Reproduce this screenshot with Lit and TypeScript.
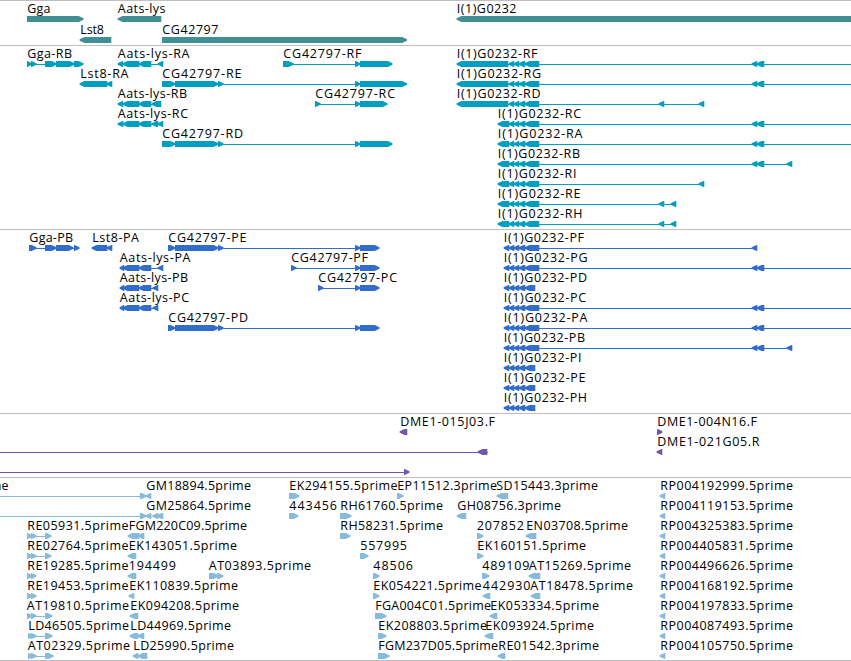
import { LitElement, css, html, nothing, svg } from 'lit'
import { customElement, property } from 'lit/decorators.js'

type Span = [number, number]

interface Feature {
  row: number
  // label text with the first and last x it covers
  label?: [string, number, number]
  strand?: string
  spans: Span[]
  line?: Span
}

interface Track {
  name: string
  height: number
  pitch: number
  features: Feature[]
}

const EDGE = 860

const f = (row: number, text: string, x: number, end: number, strand: string, spans: Span[], line?: Span): Feature => (
  { row, label: [text, x, end], strand, spans, line }
)

const reverseTail: Span[] = [[509, 514], [514, 519], [519, 525]]
const geneTail: Span[] = [...reverseTail, [525, 539]]
const longTranscript: Span[] = [[457, 508], ...geneTail]
const shortTranscript: Span[] = [[498, 509], ...geneTail]
const protein: Span[] = [[504, 509], ...geneTail]
const shortProtein: Span[] = [[504, 509], ...reverseTail, [525, 535]]
const far: Span[] = [[752, 757], [757, 764]]

const genes: Feature[] = [
  f(0, 'Gga', 28, 50, '>', [[27, 83]]),
  f(0, 'Aats-lys', 118.5, 165, '<', [[118, 161]]),
  f(0, 'I(1)G0232', 457.5, 516, '<', [[457, EDGE]]),
  f(1, 'Lst8', 81, 103.5, '<', [[80, 111]]),
  f(1, 'CG42797', 163, 218, '>', [[162, 406.5]]),
]

const transcripts: Feature[] = [
  f(0, 'Gga-RB', 28, 71.5, '>', [[27, 31], [31, 36], [45, 56], [56, 74], [74, 83]]),
  f(0, 'Aats-lys-RA', 118.5, 189, '<', [[118, 123], [123, 139], [139, 151], [158, 163]]),
  f(0, 'CG42797-RF', 284, 361, '>', [[283, 293], [355, 360], [360, 392]]),
  f(0, 'I(1)G0232-RF', 457.5, 537, '<', [...longTranscript, ...far], [457, EDGE]),
  f(1, 'Lst8-RA', 81, 128, '<', [[80, 107], [107, 112]]),
  f(1, 'CG42797-RE', 163, 241, '>', [[162, 175], [175, 218], [218, 223], [355, 360], [360, 406.5]]),
  f(1, 'I(1)G0232-RG', 457.5, 540.5, '<', [...longTranscript, ...far], [457, EDGE]),
  f(2, 'Aats-lys-RB', 118.5, 186.5, '<', [[118, 123], [123, 139], [139, 151], [152, 161]]),
  f(2, 'CG42797-RC', 316, 394.5, '>', [[315, 320], [355, 360], [360, 387]]),
  f(2, 'I(1)G0232-RD', 457.5, 540, '<', [...longTranscript, [659, 664], [699, 704]]),
  f(3, 'Aats-lys-RC', 118.5, 187.5, '<', [[118, 123], [123, 139], [139, 151], [152, 158], [158, 163]]),
  f(3, 'I(1)G0232-RC', 498.5, 580.5, '<', [...shortTranscript, ...far], [498, EDGE]),
  f(4, 'CG42797-RD', 163, 242.5, '>', [[162, 175], [175, 218], [218, 223], [355, 360], [360, 392]]),
  f(4, 'I(1)G0232-RA', 498.5, 582, '<', [...shortTranscript, ...far], [498, EDGE]),
  f(5, 'I(1)G0232-RB', 498.5, 579.5, '<', [...shortTranscript, ...far, [787, 792]]),
  f(6, 'I(1)G0232-RI', 498.5, 576, '<', [...shortTranscript, [699, 704]]),
  f(7, 'I(1)G0232-RE', 498.5, 580, '<', [...shortTranscript, [659, 664], [671, 676]]),
  f(8, 'I(1)G0232-RH', 498.5, 582, '<', [...shortTranscript, [659, 664], [671, 676]]),
]

const proteins: Feature[] = [
  f(0, 'Gga-PB', 30, 72.5, '>', [[29, 36], [45, 56], [56, 73], [74, 79]]),
  f(0, 'Lst8-PA', 93, 138.5, '<', [[92, 107], [107, 112]]),
  f(0, 'CG42797-PE', 169, 246, '>', [[168, 175], [175, 218], [218, 223], [355, 360], [360, 379]]),
  f(0, 'I(1)G0232-PF', 504.5, 583.5, '<', [...protein, [752, 757]]),
  f(1, 'Aats-lys-PA', 120.5, 190, '<', [[120, 124], [123, 139], [139, 151], [158, 163]]),
  f(1, 'CG42797-PF', 292, 367.5, '>', [[291, 296], [355, 360], [360, 379]]),
  f(1, 'I(1)G0232-PG', 504.5, 587, '<', [...protein, ...far], [504, EDGE]),
  f(2, 'Aats-lys-PB', 120.5, 187.5, '<', [[120, 124], [123, 139], [139, 151], [153, 158]]),
  f(2, 'CG42797-PC', 319, 396.5, '>', [[318, 323], [355, 360], [360, 379]]),
  f(2, 'I(1)G0232-PD', 504.5, 586.5, '<', shortProtein),
  f(3, 'Aats-lys-PC', 120.5, 188.5, '<', [[120, 124], [123, 139], [139, 151], [153, 158]]),
  f(3, 'I(1)G0232-PC', 504.5, 585.5, '<', [...protein, ...far], [504, EDGE]),
  f(4, 'CG42797-PD', 169, 247.5, '>', [[168, 175], [175, 218], [218, 223], [355, 360], [360, 379]]),
  f(4, 'I(1)G0232-PA', 504.5, 587, '<', [...protein, ...far], [504, EDGE]),
  f(5, 'I(1)G0232-PB', 504.5, 584.5, '<', [...protein, ...far, [787, 792]]),
  f(6, 'I(1)G0232-PI', 504.5, 581, '<', shortProtein),
  f(7, 'I(1)G0232-PE', 504.5, 585, '<', shortProtein),
  f(8, 'I(1)G0232-PH', 504.5, 586.5, '<', shortProtein),
]

const bacEnds: Feature[] = [
  f(0, 'DME1-015J03.F', 401, 494.5, '<', [[400, 407]]),
  f(0, 'DME1-004N16.F', 658, 756.5, '>', [[657, 662]]),
  { row: 1, strand: '<', spans: [[478, 487]], line: [-5, 488] },
  f(1, 'DME1-021G05.R', 658, 759, '<', [[657, 662]]),
  { row: 2, strand: '>', spans: [[404, 409]], line: [-5, 405] },
]

const rpIds = ['4192999', '4119153', '4325383', '4405831', '4496626', '4168192', '4197833', '4087493', '4105750']

const ests: Feature[] = [
  f(0, 'ne', -5.5, 8, '>', [[140, 146]], [-5, 141]),
  f(0, 'GM18894.5prime', 147, 250.5, '<', [[146, 151]]),
  f(0, 'EK294155.5prime', 290, 397, '>', [[289, 299]]),
  f(0, 'EP11512.3prime', 398, 496.5, '>', [[397, 403]]),
  f(0, 'SD15443.3prime', 497, 597.5, '<', [[497, 508]]),
  { row: 1, strand: '>', spans: [[140, 146]], line: [-5, 141] },
  f(1, 'GM25864.5prime', 147, 250.5, '<', [[146, 151], [153, 158], [157, 163]]),
  f(1, '443456', 290, 336.5, '>', [[289, 298]]),
  f(1, 'RH61760.5prime', 341, 442.5, '>', [[340, 351]]),
  f(1, 'GH08756.3prime', 458, 560.5, '<', [[457, 466]]),
  f(2, 'RE05931.5prime', 28, 128, '>', [[27, 32], [31, 36], [45, 51]]),
  f(2, 'FGM220C09.5prime', 129.5, 246.5, '<', [[128, 139], [138, 144]]),
  f(2, 'RH58231.5prime', 341, 442.5, '>', [[340, 350]]),
  f(2, '207852', 477.5, 523.5, '>', [[477, 483]]),
  f(2, 'EN03708.5prime', 527, 627.5, '<', [[526, 536]]),
  f(3, 'RE02764.5prime', 28, 128, '>', [[27, 32], [31, 36], [45, 51]]),
  f(3, 'EK143051.5prime', 129.5, 236.5, '<', [[128, 136]]),
  f(3, '557995', 361, 406.5, '>', [[360, 368]]),
  f(3, 'EK160151.5prime', 478, 585.5, '>', [[477, 483]]),
  f(4, 'RE19285.5prime', 28, 128, '>', [[27, 32], [31, 36]]),
  f(4, '194499', 129.5, 175.5, '<', [[128, 136]]),
  f(4, 'AT03893.5prime', 209.5, 310.5, '>', [[209, 218], [217, 223]]),
  f(4, '48506', 374, 412.5, '>', [[373, 379]]),
  f(4, '489109', 483, 529, '>', [[482, 489]]),
  f(4, 'AT15269.5prime', 529.5, 630.5, '<', [[529, 540]]),
  f(5, 'RE19453.5prime', 28, 128, '>', [[27, 32], [31, 36]]),
  f(5, 'EK110839.5prime', 130, 237.5, '<', [[129, 134]]),
  f(5, 'EK054221.5prime', 374, 481, '>', [[373, 379]]),
  f(5, '442930', 483.5, 530, '<', [[483, 490]]),
  f(5, 'AT18478.5prime', 531, 632.5, '<', [[531, 540]]),
  f(6, 'AT19810.5prime', 27.5, 128.5, '>', [[27, 32], [31, 36], [45, 52]]),
  f(6, 'EK094208.5prime', 131, 238.5, '<', [[130, 138]]),
  f(6, 'FGA004C01.5prime', 376, 490.5, '>', [[375, 386]]),
  f(6, 'EK053334.5prime', 491, 598.5, '<', [[490, 497]]),
  f(7, 'LD46505.5prime', 29, 128.5, '>', [[28, 33], [31, 36], [45, 52]]),
  f(7, 'LD44969.5prime', 131, 230.5, '<', [[130, 138], [138, 144]]),
  f(7, 'EK208803.5prime', 379, 486.5, '>', [[378, 386]]),
  f(7, 'EK093924.5prime', 486, 593.5, '<', [[485, 493]]),
  f(8, 'AT02329.5prime', 28.5, 129.5, '>', [[28, 33], [31, 36], [45, 53]]),
  f(8, 'LD25990.5prime', 134, 233.5, '<', [[133, 138], [138, 147]]),
  f(8, 'FGM237D05.5prime', 379, 497.5, '>', [[378, 389]]),
  f(8, 'RE01542.3prime', 499, 598.5, '<', [[498, 505]]),
  ...rpIds.map((id, row) => f(row, `RP00${id}.5prime`, 661, 792.5, '<', [[660, 665]])),
]

const tracks: Track[] = [
  { name: 'gene', height: 44, pitch: 21, features: genes },
  { name: 'transcript', height: 183, pitch: 20, features: transcripts },
  { name: 'protein', height: 183, pitch: 20, features: proteins },
  { name: 'bac', height: 63, pitch: 20, features: bacEnds },
  { name: 'est', height: 182, pitch: 20, features: ests },
]

@customElement('feature-track')
export class FeatureTrack extends LitElement {

  @property({ attribute: false })
  track!: Track

  static get styles() {
    return css`
      :host {
        border-top: 1px solid #bfbfbf;
        display: block;
      }
      svg {
        display: block;
        overflow: hidden;
        width: 100%;
      }
      text {
        fill: #000;
        font-family: 'Open Sans', 'Noto Sans', sans-serif;
        font-size: 12.5px;
      }
      .gene { fill: #3f8f95; }
      .transcript { fill: #009fbf; }
      .protein { fill: #326dcb; }
      .bac { fill: #7457a8; }
      .est { fill: #86bbde; }
    `
  }

  // box with a blunt arrow head on the side the strand points to
  private _points([start, end]: Span, strand?: string, y = 0) {
    const head = Math.min(5, end - start)
    return strand === '<'
      ? `${end + 0.3},${y} ${start + head - 0.5},${y} ${start - 0.4},${y + 2.3} ${start - 0.4},${y + 3.7} ${start + head - 0.5},${y + 6} ${end + 0.3},${y + 6}`
      : `${start},${y} ${end - head + 0.7},${y} ${end + 0.5},${y + 2.3} ${end + 0.5},${y + 3.7} ${end - head + 0.7},${y + 6} ${start},${y + 6}`
  }

  private _renderFeature({ row, label, strand, spans, line }: Feature) {
    const top = row * this.track.pitch
    const [from, to] = line ?? [spans[0][0], spans[spans.length - 1][1]]
    // keep the connecting line out of the outer arrow tips
    const x1 = strand === '<' ? from + 2 : from
    const x2 = strand === '>' && !line ? to - 2 : to
    return svg`
      ${spans.length > 1 || line
        ? svg`<rect x=${x1} y=${top + 18} width=${x2 - x1} height="1"></rect>`
        : nothing}
      ${spans.map(span => svg`<polygon points=${this._points(span, strand, top + 15)}></polygon>`)}
      ${label
        ? svg`<text x=${label[1] - 0.7} y=${top + 12} textLength=${label[2] - label[1] + 1.2}>${label[0]}</text>`
        : nothing}
    `
  }

  render() {
    const { name, height, features } = this.track
    return html`
      <svg class=${name} height=${height}>
        ${features.map(feature => this._renderFeature(feature))}
      </svg>
    `
  }
}

@customElement('app-root')
export class AppRoot extends LitElement {

  static get styles() {
    return css`
      :host {
        background: #fff;
        display: block;
        height: 661px;
        overflow: hidden;
      }
      .tracks {
        border-bottom: 1px solid #bfbfbf;
        display: flex;
        flex-direction: column;
      }
    `
  }

  render() {
    return html`
      <div class="tracks">
        ${tracks.map(track => html`<feature-track .track=${track}></feature-track>`)}
      </div>
    `
  }
}
